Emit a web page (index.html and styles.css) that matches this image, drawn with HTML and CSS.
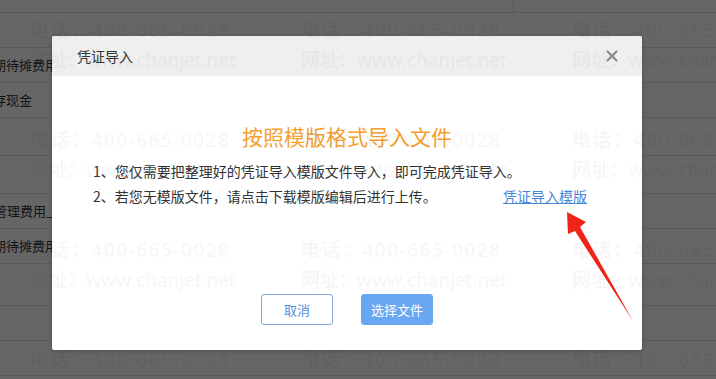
FILE: index.html
```html
<!DOCTYPE html>
<html lang="zh-CN">
<head>
  <meta charset="UTF-8">
  <title>凭证导入</title>
  <link rel="stylesheet" href="styles.css">
</head>
<body>
  <div class="page">
    <div class="sheet">
      <div class="row row-top"><span class="split"></span></div>
      <div class="row"></div>
      <div class="row"><span class="cell">长期待摊费用</span></div>
      <div class="row"><span class="cell">库存现金</span></div>
      <div class="row row-tall"></div>
      <div class="row row-tall"></div>
      <div class="row"><span class="cell cell-sub">管理费用_折旧费</span></div>
      <div class="row"><span class="cell">长期待摊费用</span></div>
      <div class="row row-wide"></div>
      <div class="row"></div>
      <div class="row"></div>
    </div>

    <div class="dialog">
      <div class="dialog-head">
        <span class="dialog-title">凭证导入</span>
        <svg class="close" width="12" height="12" viewBox="0 0 12 12">
          <path d="M1.5 1.5 L10.5 10.5 M10.5 1.5 L1.5 10.5" stroke="#8c8c8c" stroke-width="2.2" stroke-linecap="round"/>
        </svg>
      </div>
      <div class="dialog-body">
        <h2 class="heading">按照模版格式导入文件</h2>
        <div class="tips">
          <div class="tip">1、您仅需要把整理好的凭证导入模版文件导入，即可完成凭证导入。</div>
          <div class="tip">2、若您无模版文件，请点击下载模版编辑后进行上传。<a class="tpl-link" href="#">凭证导入模版</a></div>
        </div>
      </div>
      <div class="dialog-foot">
        <button class="btn btn-ghost">取消</button>
        <button class="btn btn-primary">选择文件</button>
      </div>
    </div>

    <div class="watermark">
      <div class="mark"><div class="tel">电话：400-665-0028</div><div class="web">网址：www.chanjet.net</div></div>
      <div class="mark"><div class="tel">电话：400-665-0028</div><div class="web">网址：www.chanjet.net</div></div>
      <div class="mark"><div class="tel">电话：400-665-0028</div><div class="web">网址：www.chanjet.net</div></div>
      <div class="mark"><div class="tel">电话：400-665-0028</div><div class="web">网址：www.chanjet.net</div></div>
      <div class="mark"><div class="tel">电话：400-665-0028</div><div class="web">网址：www.chanjet.net</div></div>
      <div class="mark"><div class="tel">电话：400-665-0028</div><div class="web">网址：www.chanjet.net</div></div>
      <div class="mark"><div class="tel">电话：400-665-0028</div><div class="web">网址：www.chanjet.net</div></div>
      <div class="mark"><div class="tel">电话：400-665-0028</div><div class="web">网址：www.chanjet.net</div></div>
      <div class="mark"><div class="tel">电话：400-665-0028</div><div class="web">网址：www.chanjet.net</div></div>
      <div class="mark"><div class="tel">电话：400-665-0028</div><div class="web">网址：www.chanjet.net</div></div>
      <div class="mark"><div class="tel">电话：400-665-0028</div><div class="web">网址：www.chanjet.net</div></div>
      <div class="mark"><div class="tel">电话：400-665-0028</div><div class="web">网址：www.chanjet.net</div></div>
    </div>

    <svg class="arrow" width="716" height="379" viewBox="0 0 716 379">
      <polygon points="567,212 586,222 580,227 633,321 575,231 568,234" fill="#ee2418"/>
    </svg>
  </div>
</body>
</html>
```

FILE: styles.css
```css
* { box-sizing: border-box; }
body {
  margin: 0;
  font-family: "Noto Sans CJK SC", "Noto Sans", sans-serif;
  overflow: hidden;
}
.page {
  position: relative;
  width: 716px; height: 379px;
  background: #666;
  overflow: hidden;
}

/* page behind the mask */
.sheet { display: flex; flex-direction: column; }
.row {
  height: 35px; border-bottom: 1px solid #5a5a5a;
  font-size: 13px; line-height: 34px; color: #141414;
  white-space: nowrap;
}
.row-top { height: 13px; }
.row-top .split { display: block; width: 514px; height: 12px; border-right: 1px solid #5a5a5a; }
.row-tall { height: 38px; }
.row-wide { height: 42px; }
.cell { display: block; margin-left: -20px; }
.cell-sub { margin-left: -6px; }

/* dialog */
.dialog {
  position: absolute; left: 52px; top: 36px;
  width: 590px; height: 314px;
  background: #fff; border-radius: 2px;
  box-shadow: 0 1px 4px rgba(0,0,0,0.25);
  display: flex; flex-direction: column;
}
.dialog-head {
  height: 40px; background: #efefef;
  display: flex; align-items: center; justify-content: space-between;
  padding: 0 24px 0 25px;
  border-radius: 2px 2px 0 0;
}
.dialog-title { font-size: 14px; color: #333; }
.dialog-body { padding: 45px 55px 0 41px; }
.heading {
  margin: 0; text-align: center;
  font-size: 21px; line-height: 30px; font-weight: normal;
  color: #f5a030; padding-left: 14px;
}
.tips { margin-top: 8px; font-size: 14px; line-height: 25px; color: #333; }
.tip { display: flex; }
.tpl-link { margin-left: auto; color: #4a86d8; text-decoration: underline; }

.dialog-foot {
  margin-top: auto; padding-bottom: 25px;
  display: flex; justify-content: center; gap: 28px;
}
.btn {
  width: 72px; height: 31px; border-radius: 3px;
  font-family: inherit; font-size: 13px; cursor: pointer;
}
.btn-ghost { background: #fff; border: 1px solid #7fa9dc; color: #5a8fd6; }
.btn-primary { background: #6aa7f3; border: 1px solid #6aa7f3; color: #fff; }

/* watermark over everything */
.watermark {
  position: absolute; left: 0; top: 0; right: 0; bottom: 0;
  pointer-events: none;
  display: grid; grid-template-columns: repeat(3, 271px);
  grid-auto-rows: 110px;
  padding: 15px 0 0 30px;
}
.mark {
  font-size: 19px; line-height: 30px; font-weight: 600;
  color: rgba(0,0,0,0.055); white-space: nowrap;
  font-family: "Open Sans", "Noto Sans CJK SC", sans-serif;
}
.mark .tel { letter-spacing: 1.5px; }
.mark .web { letter-spacing: -0.4px; }

.arrow { position: absolute; left: 0; top: 0; pointer-events: none; }
```
